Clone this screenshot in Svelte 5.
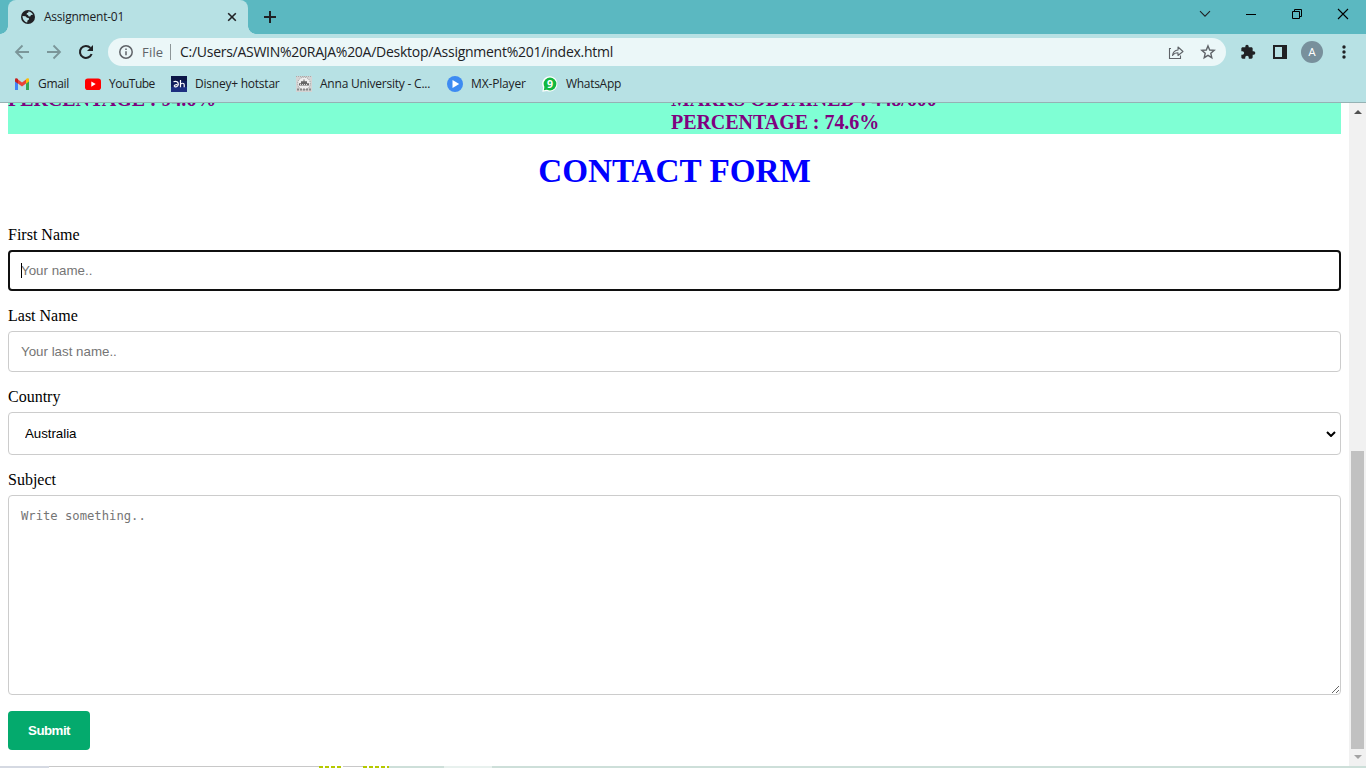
<script>
  const bookmarks = [
    { id: 'gmail', label: 'Gmail', w: 31, gap: 16, ls: -0.3 },
    { id: 'youtube', label: 'YouTube', w: 46, gap: 16, ls: -0.5 },
    { id: 'hotstar', label: 'Disney+ hotstar', w: 85, gap: 16, ls: -0.23 },
    { id: 'anna', label: 'Anna University - C...', w: 111, gap: 16, ls: -0.22 },
    { id: 'mx', label: 'MX-Player', w: 55, gap: 16, ls: -0.15 },
    { id: 'whatsapp', label: 'WhatsApp', w: 56, gap: 0, ls: -0.3 }
  ];
</script>

<div class="window">
  <header class="tabs">
    <div class="tab">
      <svg class="globe" width="14" height="14" viewBox="0 0 14 14"><circle cx="7" cy="7" r="7" fill="#202124" /><path d="M1.500 6l3 .3L6 7.800l1.800.3.200 1.500-1.500 1-.3 1.800C3.500 12 1.600 9.500 1.500 6zM7.300 1.500c2.200.2 4 1.400 4.700 3.300l-2 .2-.8 1.600-1.800-.4-.3-1.300-1.500-.4.3-1.600 1.400-.2z" fill="#b7e1e4" /></svg>
      <span class="title">Assignment-01</span>
      <svg width="10" height="10" viewBox="0 0 10 10" stroke="#202124" stroke-width="1.600"><path d="M1.200 1.200l7.600 7.600M8.800 1.200L1.200 8.800" /></svg>
    </div>
    <svg class="plus" width="12" height="12" viewBox="0 0 12 12" stroke="#202124" stroke-width="2"><path d="M6 0v12M0 6h12" /></svg>
    <div class="controls">
      <svg width="12" height="12" viewBox="0 0 12 12" fill="none" stroke="#202124" stroke-width="1.100"><path d="M1 3.200l5 5 5-5" /></svg>
      <svg width="12" height="12" viewBox="0 0 12 12" stroke="#000"><path d="M1 6.500h10" /></svg>
      <svg width="12" height="12" viewBox="0 0 12 12" fill="none" stroke="#000"><path d="M1.500 3.500h7v7h-7zM3.500 3.500v-2h7v7h-2" /></svg>
      <svg width="12" height="12" viewBox="0 0 12 12" stroke="#000" stroke-width="1.100"><path d="M1 1l10 10M11 1L1 11" /></svg>
    </div>
  </header>

  <div class="toolbar">
    <svg width="16" height="16" viewBox="0 0 16 16" fill="none" stroke="#7b9699" stroke-width="1.800"><path d="M15 8H2M8.500 1.500L2 8l6.500 6.500" /></svg>
    <svg width="16" height="16" viewBox="0 0 16 16" fill="none" stroke="#7b9699" stroke-width="1.800"><path d="M1 8h13M7.500 1.500L14 8l-6.500 6.500" /></svg>
    <svg width="16" height="16" viewBox="0 0 16 16" fill="none" stroke="#202124" stroke-width="2.100"><path d="M13.600 10A6 6 0 1 1 12.400 3.900" /><path d="M15 1v6H9z" fill="#202124" stroke="none" /></svg>
    <div class="address">
      <svg width="14" height="14" viewBox="0 0 14 14" fill="none" stroke="#5f6368" stroke-width="1.500"><circle cx="7" cy="7" r="6.200" /><path d="M7 6.300v4M7 3.500v1.600" /></svg>
      <span class="file">File</span>
      <i></i>
      <span class="url">C:/Users/ASWIN%20RAJA%20A/Desktop/Assignment%201/index.html</span>
      <svg class="share" width="16" height="16" viewBox="0 0 16 16" fill="none" stroke="#5f6368" stroke-width="1.100"><path d="M3 4.500H1.500v10h11v-3" /><path d="M4.500 11.500c.5-3.700 2.200-5.300 5.500-5.500V3l5 4.500-5 4V8.800c-2.500 0-4.200.8-5.500 2.700z" stroke-linejoin="round" /></svg>
      <svg width="16" height="16" viewBox="0 0 16 16" fill="none" stroke="#5f6368" stroke-width="1.400"><path d="M8 1.900l1.700 4.100 4.500.4-3.400 2.900 1 4.400L8 11.400l-3.800 2.300 1-4.400-3.400-2.900 4.500-.4z" /></svg>
    </div>
    <svg class="puzzle" width="16" height="16" viewBox="0 0 24 24" fill="#202124"><path d="M20.500 11H19V7c0-1.100-.9-2-2-2h-4V3.500a2.500 2.500 0 0 0-5 0V5H4c-1.100 0-2 .9-2 2v3.800h1.500a2.700 2.700 0 0 1 0 5.400H2V20c0 1.100.9 2 2 2h3.800v-1.500a2.700 2.700 0 0 1 5.400 0V22H17c1.100 0 2-.9 2-2v-4h1.500a2.500 2.500 0 0 0 0-5z" /></svg>
    <svg class="panel" width="14" height="14" viewBox="0 0 14 14"><path d="M0 0h14v14H0z" fill="#202124" /><path d="M2 2h7v10H2z" fill="#b7e1e4" /></svg>
    <span class="avatar">A</span>
    <svg class="dots" width="4" height="14" viewBox="0 0 4 14" fill="#202124"><circle cx="2" cy="2" r="1.700" /><circle cx="2" cy="7" r="1.700" /><circle cx="2" cy="12" r="1.700" /></svg>
  </div>

  <nav>
    {#each bookmarks as b}
      <svg width="16" height="16" viewBox="0 0 16 16">
        {#if b.id === 'gmail'}
          <path d="M1 3.500V14h3V7z" fill="#4285f4" /><path d="M15 3.500V14h-3V7z" fill="#34a853" /><path d="M4 3.600v4l4 3 4-3v-4L8 6.600z" fill="#ea4335" /><path d="M1 3.800C1 2 2.800 1.900 4 3v4.700L1 5.400z" fill="#c5221f" /><path d="M15 3.800C15 2 13.200 1.900 12 3v4.700l3-2.300z" fill="#fbbc04" />
        {:else if b.id === 'youtube'}
          <rect y="2.500" width="16" height="11.500" rx="2.800" fill="#f00" /><path d="M6.300 5.500v5.200L10.700 8.100z" fill="#fff" />
        {:else if b.id === 'hotstar'}
          <rect width="16" height="16" fill="#1c2f80" /><rect width="16" height="11" fill="#0f1d5c" /><rect width="16" height="5" fill="#0b1546" /><g fill="none" stroke="#fff" stroke-width="1.200"><path d="M2.500 5.700c3-1.200 5 .5 4.800 2.800-.2 2.300-3.300 3-4 1.800-.5-1.200 1.300-1.800 3-1.600M9.500 4v7.300M9.500 8.500c.7-1.600 3.700-1.800 3.700.3v2.500" /></g>
        {:else if b.id === 'anna'}
          <rect width="16" height="16" fill="#d4d4d4" /><circle cx="8" cy="7.500" r="6.300" fill="#eee" stroke="#999" stroke-dasharray="1 1" /><path d="M3 7.200h10v2.300H3zM5 5.300h6v2H5zM7.500 3.500h1v2h-1z" fill="#666" /><path d="M4 8.500h8" stroke="#ddd" stroke-dasharray="1 1" /><path d="M1 13.500h14" stroke="#888" stroke-width="2" stroke-dasharray="2 1" /><path d="M0 .5h16" stroke="#aaa" stroke-dasharray="1 1" />
        {:else if b.id === 'mx'}
          <circle cx="8" cy="8" r="8" fill="#3d8bf2" /><path d="M5.500 4v8l6.700-4z" fill="#fff" />
        {:else}
          <path d="M.3 15.700l.8-4.200A7.600 7.600 0 1 1 5 14.900z" fill="#fff" /><circle cx="8" cy="8" r="6.400" fill="#12b83f" /><path d="M1.800 14.200l.7-3.700 3 2.900z" fill="#12b83f" /><text x="8" y="11.800" text-anchor="middle" font-size="10.500" font-weight="700" font-family="Open Sans, sans-serif" fill="#fff">9</text>
        {/if}
      </svg>
      <span style:width="{b.w}px" style:margin-right="{b.gap}px" style:letter-spacing="{b.ls}px">{b.label}</span>
    {/each}
  </nav>

  <div class="view">
    <main>
      <section class="marks">
        <div>PERCENTAGE : 94.6%</div>
        <div>MARKS OBTAINED : 448/600<br />PERCENTAGE : 74.6%</div>
      </section>
      <h1>CONTACT FORM</h1>
      <form>
        <label for="fname">First Name</label>
        <div class="field"><input id="fname" class="focused" placeholder="Your name.." /><b class="caret"></b></div>
        <label for="lname">Last Name</label>
        <input id="lname" placeholder="Your last name.." />
        <label for="country">Country</label>
        <select id="country"><option>Australia</option></select>
        <label for="subject">Subject</label>
        <textarea id="subject" placeholder="Write something.."></textarea>
        <button type="button">Submit</button>
      </form>
    </main>
    <aside>
      <svg width="8" height="4" viewBox="0 0 8 4"><path d="M4 0l4 4H0z" fill="#505050" /></svg>
      <div class="thumb"></div>
      <svg width="8" height="4" viewBox="0 0 8 4"><path d="M4 4l4-4H0z" fill="#a3a3a3" /></svg>
    </aside>
  </div>
  <footer><i class="f1"></i><i class="f2"></i><i class="f3"></i><i class="f2 gap"></i><i class="f3 short"></i><i class="f4"></i><i class="f5"></i><i class="f6"></i></footer>
</div>

<style>
  :global(body) { margin: 0; overflow: hidden; }
  * { box-sizing: border-box; }
  svg { flex: none; display: block; }
  .window { width: 1366px; height: 768px; display: flex; flex-direction: column; overflow: hidden; background: #fff; font-family: "Open Sans", sans-serif; color: #202124; }
  .tabs { height: 34px; flex: none; background: #5bb8c1; display: flex; align-items: center; padding-left: 8px; }
  .tab { width: 240px; height: 34px; background: #b7e1e4; border-radius: 8px 8px 0 0; display: flex; align-items: center; padding: 0 11px 0 13px; position: relative; }
  .tab::before, .tab::after { content: ""; position: absolute; bottom: 0; width: 8px; height: 8px; }
  .tab::before { left: -8px; background: radial-gradient(circle at 0 0, #5bb8c1 7.5px, #b7e1e4 8px); }
  .tab::after { right: -8px; background: radial-gradient(circle at 100% 0, #5bb8c1 7.5px, #b7e1e4 8px); }
  .title { flex: 1; margin-left: 9px; padding-bottom: 2px; font-size: 12px; letter-spacing: -0.22px; white-space: nowrap; }
  .plus { margin-left: 16px; }
  .controls { margin-left: auto; margin-right: 17px; display: flex; gap: 34px; margin-top: -6px; }
  .toolbar { height: 36px; flex: none; background: #b7e1e4; display: flex; align-items: center; padding-left: 14px; gap: 16px; }
  .address { width: 1118px; height: 28px; margin-left: -2px; border-radius: 14px; background: #ebf7f8; display: flex; align-items: center; padding: 0 10px 0 11px; font-size: 14px; white-space: nowrap; }
  .file { margin-left: 9px; width: 21px; color: #5f6368; font-size: 13px; letter-spacing: 0.2px; padding-bottom: 1px; }
  .address i { width: 1px; height: 16px; background: #8d9698; margin: 0 9px 0 7px; }
  .url { flex: 1; letter-spacing: -0.27px; padding-bottom: 2px; }
  .share { margin-right: 16px; }
  .puzzle { margin-left: -2px; }
  .panel { margin-left: 1px; }
  .avatar { width: 22px; height: 22px; border-radius: 50%; background: #78909c; color: #fff; font: 11.5px/23px Roboto, sans-serif; text-align: center; margin-left: -2px; }
  .dots { margin-left: 3px; }
  nav { height: 33px; flex: none; background: #b7e1e4; border-bottom: 1px solid #96b2b4; display: flex; align-items: center; padding: 0 0 5px 14px; font-size: 12px; }
  nav span { margin-left: 8px; white-space: nowrap; }
  .view { height: 663px; flex: none; display: flex; overflow: hidden; }
  main { width: 1349px; padding: 0 8px; overflow: hidden; font-family: "Liberation Serif", serif; color: #000; }
  .marks { height: 46px; margin-top: -15px; background: #7fffd4; display: flex; }
  .marks div { width: 663px; color: purple; font-size: 20px; line-height: 23px; font-weight: 700; letter-spacing: -0.05px; }
  h1 { margin: 18px 0 0; height: 40px; line-height: 38px; text-align: center; font-size: 33.200px; color: #00f; }
  form { display: flex; flex-direction: column; align-items: stretch; padding-top: 34px; }
  label { font-size: 16px; line-height: 18px; margin-bottom: 6px; }
  input, select, textarea { width: 100%; border: 1px solid #ccc; border-radius: 4px; padding: 12px; background: #fff; margin: 0 0 16px; font: 13.333px "Liberation Sans", sans-serif; outline: none; color: #000; }
  input { height: 41px; }
  .field { position: relative; height: 57px; }
  .focused { border: 2px solid #101010; padding: 11px; }
  .caret { position: absolute; left: 13px; top: 13px; width: 1px; height: 15px; background: #000; }
  ::placeholder { color: #757575; opacity: 1; }
  select { height: 43px; padding-right: 12px; border-radius: 4px; letter-spacing: -0.05px; appearance: none; padding-left: 16px; background: #fff url("data:image/svg+xml,%3Csvg xmlns='http://www.w3.org/2000/svg' width='10' height='6'%3E%3Cpath d='M1 1l4 4 4-4' fill='none' stroke='black' stroke-width='2'/%3E%3C/svg%3E") no-repeat right 4px center; }
  textarea { height: 200px; padding-top: 13px; resize: vertical; font: 12.200px "DejaVu Sans Mono", monospace; }
  button { width: 82px; height: 39px; border: 0; border-radius: 4px; background: #04aa6d; color: #fff; font: 700 13.333px "Liberation Sans", sans-serif; letter-spacing: -0.55px; padding: 0; }
  aside { width: 17px; background: #f1f1f1; display: flex; flex-direction: column; align-items: center; padding: 7px 0 7px; }
  .thumb { width: 13px; height: 298px; background: #c1c1c1; margin: auto 0 6px; }
  footer { height: 2px; flex: none; display: flex; }
  .f1 { width: 49px; background: #d5d9e2; }
  .f2 { width: 270px; border-top: 1px solid #c8c8c8; }
  .f2.gap { width: 20px; }
  .f3 { width: 24px; background: repeating-linear-gradient(90deg, #b5c900 0 4px, #fff 4px 6px); }
  .f3.short { width: 26px; }
  .f4 { width: 55px; background: #cddfd9; }
  .f5 { width: 48px; background: #e8f1ee; }
  .f6 { flex: 1; background: #cddfd9; }
</style>
